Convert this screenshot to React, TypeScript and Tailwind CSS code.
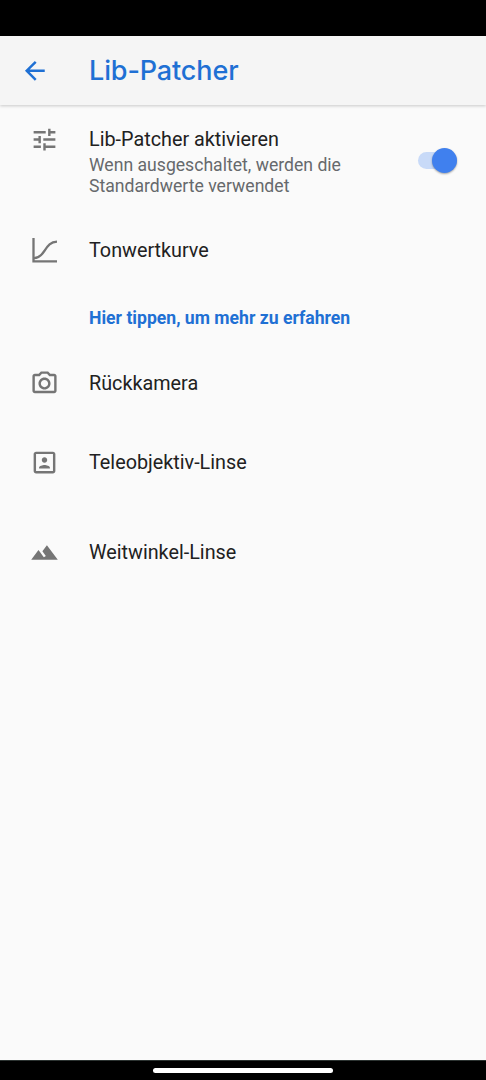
import React from "react";
import { MdArrowBack, MdFilterHdr, MdOutlinePhotoCamera, MdPortrait, MdTune } from "react-icons/md";

interface RowProps {
    icon?: React.ReactNode;
    title: string;
    className: string;
}

const CurveIcon = () => (
    <svg width="30" height="30" viewBox="0 0 30 30" fill="none" stroke="currentColor" strokeWidth="2.3">
        <path d="M3.5 2V25.4H27" />
        <path d="M4 22.2C9.3 22.2 12 18.8 14.8 14.4C17.8 9.6 20.5 5.8 27 5.6" />
    </svg>
);

const Row = ({ icon, title, className }: RowProps) => (
    <button className={`flex w-full items-center text-left ${className}`}>
        <span className="flex w-[89px] shrink-0 pb-px pl-[30px] text-[#757575]">{icon}</span>
        <span className="text-[19.8px] leading-6 text-[#212121]">{title}</span>
    </button>
);

export default function App() {
    const [enabled, setEnabled] = React.useState(true);

    return (
        <div className="flex h-[1080px] w-[486px] flex-col overflow-hidden bg-[#fafafa] font-['Roboto',sans-serif]">
            <div className="h-9 shrink-0 bg-black" />

            {/* Toolbar */}
            <header className="flex h-[69px] shrink-0 items-center bg-[#f5f5f5] shadow-[0_1px_3px_rgba(0,0,0,0.2)]">
                <button className="flex w-[89px] shrink-0 pl-5 text-[#1f70d4]" aria-label="Zurück">
                    <MdArrowBack size={29.7} />
                </button>
                <h1 className="pt-px font-['Inter',sans-serif] text-[27px] font-medium leading-8 tracking-[-0.12px] text-[#1f70d4]">
                    Lib-Patcher
                </h1>
            </header>

            <main className="flex-1 pt-px">
                {/* Master switch */}
                <div className="flex h-[105px] items-start pt-5">
                    <span className="-mt-px flex w-[89px] shrink-0 pl-[30px] text-[#757575]">
                        <MdTune size={29} />
                    </span>
                    <div className="w-[329px] pt-0.5">
                        <p className="text-[19.8px] leading-6 text-[#212121]">Lib-Patcher aktivieren</p>
                        <p className="w-[270px] pt-[3px] text-[17.62px] leading-[21px] text-[#66696c]">
                            Wenn ausgeschaltet, werden die Standardwerte verwendet
                        </p>
                    </div>
                    <button
                        role="switch"
                        aria-checked={enabled}
                        onClick={() => setEnabled(!enabled)}
                        className={`mt-[26px] flex h-[17px] w-[39px] items-center rounded-full ${enabled ? "justify-end bg-[#c8daf8]" : "justify-start bg-[#bdbdbd]"}`}
                    >
                        <span className={`h-[25px] w-[25px] shrink-0 rounded-full shadow-[0_1px_2px_rgba(0,0,0,0.35)] ${enabled ? "bg-[#4080ee]" : "bg-white"}`} />
                    </button>
                </div>

                <Row className="h-20" icon={<CurveIcon />} title="Tonwertkurve" />
                <a className="flex h-[53px] items-center pl-[89px] pt-0.5 text-[17.6px] font-bold text-[#1f70d4]">
                    Hier tippen, um mehr zu erfahren
                </a>
                <Row className="h-[79px]" icon={<MdOutlinePhotoCamera size={29} />} title="Rückkamera" />
                <Row className="h-20" icon={<MdPortrait size={29} />} title="Teleobjektiv-Linse" />
                <Row className="h-[100px]" icon={<MdFilterHdr size={29} />} title="Weitwinkel-Linse" />
            </main>

            {/* Gesture bar */}
            <div className="flex h-5 shrink-0 items-center justify-center border-t border-[#2c3331] bg-black">
                <div className="h-[5px] w-[180px] rounded-full bg-white" />
            </div>
        </div>
    );
}
